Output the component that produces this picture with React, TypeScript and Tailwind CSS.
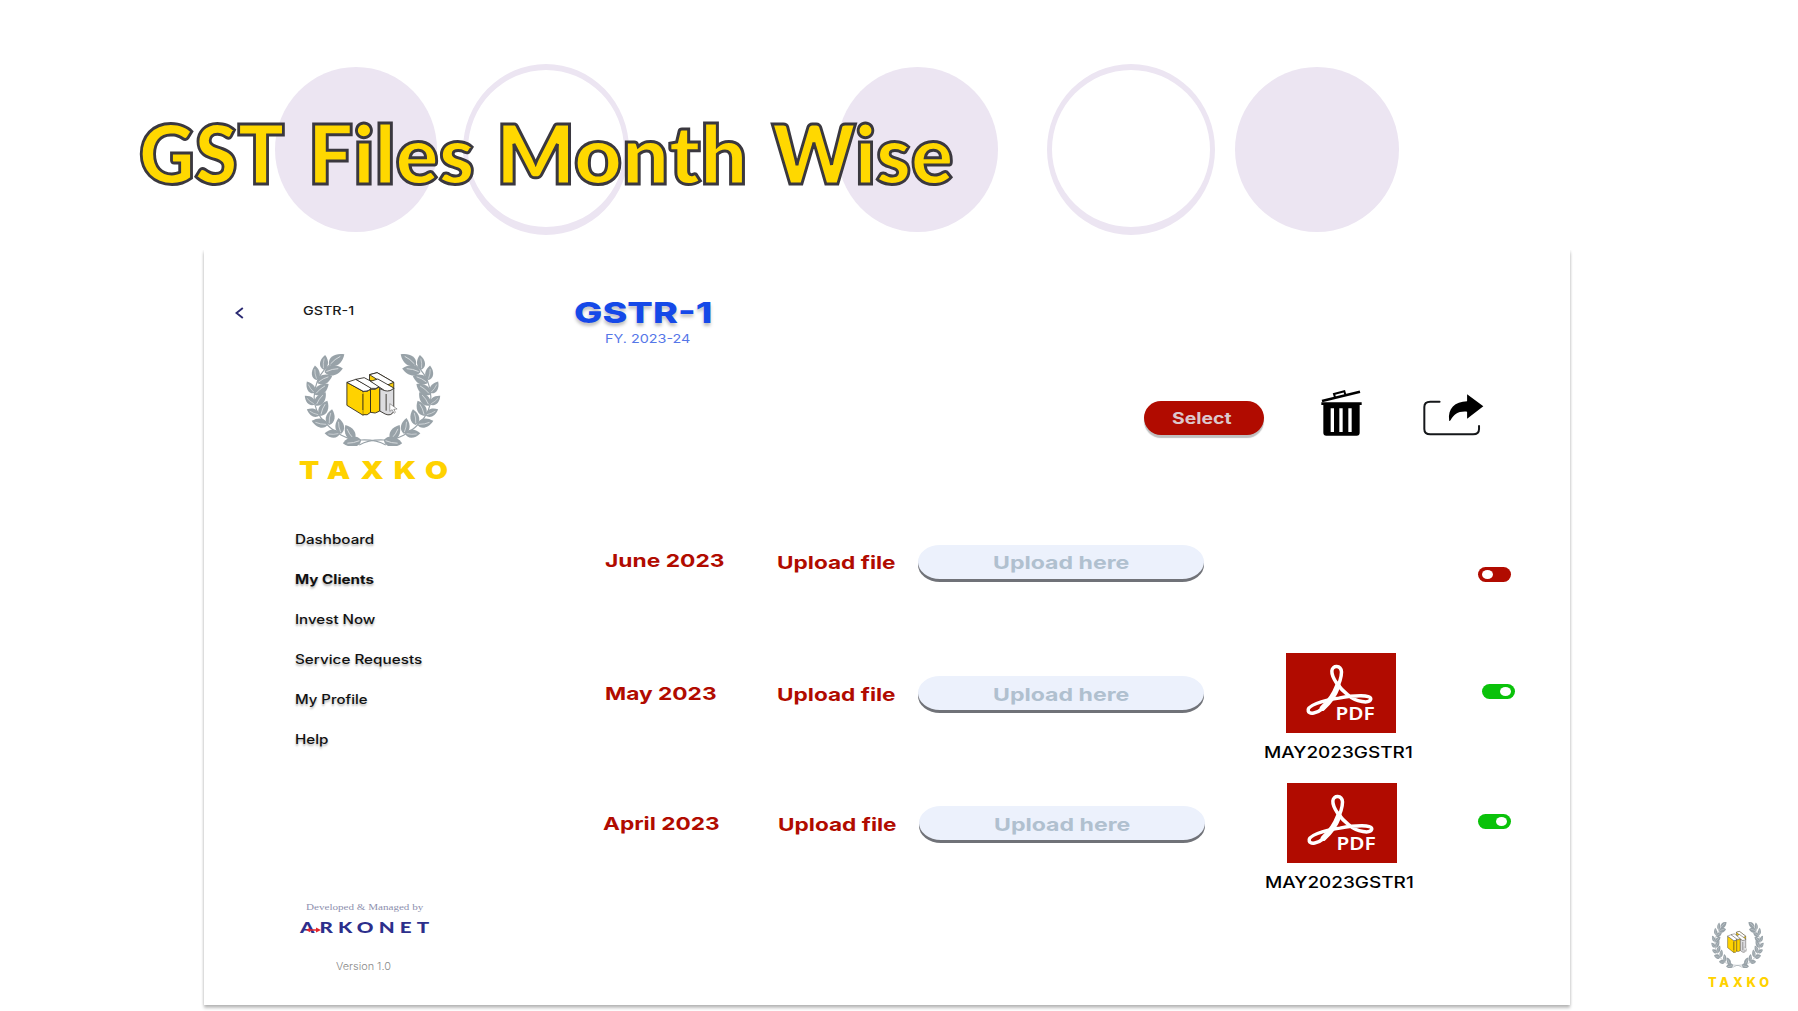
import { useLayoutEffect, useRef, useState } from "react";
import type { ReactNode } from "react";

/** Single line of text stretched horizontally to fill the width of its box. */
function Fit({ className, children }: { className: string; children: ReactNode }) {
  const box = useRef<HTMLDivElement>(null);
  const text = useRef<HTMLSpanElement>(null);
  const [scale, setScale] = useState(1);
  useLayoutEffect(() => {
    if (!box.current || !text.current) return;
    const spacing = parseFloat(getComputedStyle(text.current).letterSpacing) || 0;
    const natural = text.current.offsetWidth - spacing;
    if (natural > 0) setScale(box.current.clientWidth / natural);
  }, []);
  return (
    <div ref={box} className={`shrink-0 whitespace-nowrap ${className}`}>
      <span ref={text} className="inline-block origin-left" style={{ transform: `scaleX(${scale})` }}>
        {children}
      </span>
    </div>
  );
}

const leaves: [number, number, number, number][] = [
  [388, 374, -36, 56],
  [371, 387, -84, 44],
  [374, 395, -12, 56],
  [351, 418, -98, 44],
  [352, 427, -26, 50],
  [344, 457, -124, 42],
  [345, 462, -38, 52],
  [345, 491, -140, 40],
  [348, 495, -54, 50],
  [359, 523, -156, 42],
  [362, 526, -66, 50],
  [384, 551, -168, 50],
  [388, 553, -80, 48],
  [420, 578, -180, 46],
  [424, 579, -100, 48],
  [464, 597, -122, 52],
  [484, 598, 170, 56],
];

function Branch() {
  return (
    <g>
      <path d="M390 372C345 405 325 480 362 530C400 580 450 600 484 598Q528 596 558 613" fill="none" stroke="#98a2a8" strokeWidth="3.5" />
      {leaves.map(([x, y, a, l], i) => (
        <g key={i} transform={`translate(${x} ${y}) rotate(${a}) scale(${l / 50})`}>
          <path d="M0 0C6-19 31-20 50 0C33 16 11 18 0 0Z" fill="#98a2a8" />
          <path d="M5-1Q22-5 38-2" fill="none" stroke="#dfe3e5" strokeWidth="2.2" />
        </g>
      ))}
    </g>
  );
}

function Emblem({ className }: { className: string }) {
  return (
    <svg viewBox="312 340 412 276" preserveAspectRatio="none" className={className}>
      <Branch />
      <g transform="translate(1036 0) scale(-1 1)">
        <Branch />
      </g>
      <g stroke="#29251f" strokeWidth="2.6" strokeLinejoin="round">
        <path d="M509 402L532 396L582 425V445L555 440L509 418Z" fill="#f8cd08" />
        <path d="M509 402L532 396L582 425L560 434Z" fill="#fff" />
        <path d="M441 425L490 452V524L441 494Z" fill="#ffd200" />
        <path d="M490 452Q503 455 512 446V515Q503 526 490 522Z" fill="#ffd200" />
        <path d="M441 425L468 416L514 441Q510 452 490 452Z" fill="#fff" />
        <path d="M512 446Q526 450 540 438V511Q526 521 512 515Z" fill="#ffd200" />
        <path d="M468 416L493 411L540 436Q530 447 514 443Z" fill="#fff" />
        <path d="M540 444Q562 456 582 442V512Q574 528 556 520L540 511Z" fill="#dcdcdf" />
        <path d="M512 422L534 415L582 442Q572 454 555 450Z" fill="#fff" />
        <path d="M559 460V510" fill="none" />
      </g>
      <path d="M489.500 454V521" stroke="#ffd200" strokeWidth="4" />
      <path d="M489 460V508" stroke="#29251f" strokeWidth="2.2" />
      <path d="M570 489V512L577 507L583 518L587 515L582 506L592 505Z" fill="#fff" stroke="#555" strokeWidth="1.5" />
    </svg>
  );
}

function PdfTile() {
  return (
    <svg viewBox="139 39 331 241" preserveAspectRatio="none" className="block h-[80px] w-[110px]">
      <rect x="139" y="39" width="331" height="241" fill="#b10b00" />
      <g fill="none" stroke="#fff" strokeLinecap="round">
        <path strokeWidth="10.5" d="M206 214C200 198 248 182 298 175C345 166 396 164 394 178C391 192 350 188 325 165C300 145 276 115 277 93C279 75 304 75 306 96C306 128 276 183 250 206C231 222 210 224 206 214Z" />
        <path strokeWidth="17" d="M295 138C286 162 269 188 249 205" />
      </g>
      <text x="288" y="241" textLength="118" lengthAdjust="spacingAndGlyphs" fill="#fff" fontSize="54" fontWeight="600" fontFamily="'Noto Sans', sans-serif">
        PDF
      </text>
    </svg>
  );
}

function Toggle({ on }: { on: boolean }) {
  return (
    <div className={`flex h-[15px] w-[33px] items-center rounded-full px-[4px] ${on ? "justify-end bg-[#0ac20a]" : "justify-start bg-[#b10b00]"}`}>
      <div className="h-[9px] w-[11px] rounded-[50%] bg-white" />
    </div>
  );
}

function TrashIcon() {
  return (
    <svg viewBox="604 58 123 138" preserveAspectRatio="none" className="h-[46px] w-[41px]">
      <path d="M607 91L721 63" stroke="#000" strokeWidth="7.5" />
      <path d="M646 80L643 70L674 62L677 72" fill="none" stroke="#000" strokeWidth="6" />
      <path d="M605 95H726V103H720V186Q720 195 711 195H620Q611 195 611 186V103H605Z" />
      <path d="M638 113V184M664 113V184M691 113V184" stroke="#fff" strokeWidth="10" />
    </svg>
  );
}

function ShareIcon() {
  return (
    <svg viewBox="908 70 184 126" preserveAspectRatio="none" className="h-[42px] w-[61px]">
      <path d="M958 93H930Q912 93 912 109V175Q912 191 930 191H1059Q1077 191 1077 175V166" fill="none" stroke="#15171a" strokeWidth="6" strokeLinecap="round" />
      <path d="M987 150C982 114 1004 93 1041 92V71L1090 107L1041 144V123C1014 121 1002 130 991 149Q988 152 987 150Z" />
    </svg>
  );
}

interface RowProps {
  month: string;
  monthClass: string;
  uploadClass: string;
  shift: string;
  toggleClass: string;
  file?: string;
  on: boolean;
}

function Row({ month, monthClass, uploadClass, shift, toggleClass, file, on }: RowProps) {
  return (
    <div className="flex h-[130px] items-start font-bold text-[#b10b00]">
      <div className="w-[178px]">
        <Fit className={`text-[18px] leading-[20px] ${monthClass}`}>{month}</Fit>
      </div>
      <div className={`flex ${shift}`}>
        <Fit className={`w-[118px] text-[18px] leading-[20px] ${uploadClass}`}>Upload file</Fit>
        <div className="ml-[23px] mt-[23px] h-[34px] w-[286px] rounded-[22px/17px] bg-[#ecf1fc] pl-[75px] text-[#b0c0cf] shadow-[0_3px_0_#707278]">
          <Fit className={`-mt-[23px] w-[136px] text-[18px] leading-[20px] ${uploadClass}`}>Upload here</Fit>
        </div>
        <div className="ml-[60px] flex w-[148px] flex-col items-center pl-[6px] text-black">
          {file && (
            <>
              <PdfTile />
              <Fit className="-ml-[5px] mt-[10px] w-[149px] text-[15.5px] font-medium leading-[20px]">{file}</Fit>
            </>
          )}
        </div>
      </div>
      <div className={toggleClass}>
        <Toggle on={on} />
      </div>
    </div>
  );
}

const menu = [
  { label: "Dashboard", style: "w-[79px] font-medium" },
  { label: "My Clients", style: "w-[79px] font-bold" },
  { label: "Invest Now", style: "w-[81px] font-medium" },
  { label: "Service Requests", style: "w-[127px] font-medium" },
  { label: "My Profile", style: "w-[73px] font-medium" },
  { label: "Help", style: "w-[34px] font-medium" },
];

export default function App() {
  return (
    <main className="flex h-[1011px] w-[1798px] flex-col overflow-hidden bg-white font-['Inter',sans-serif]">
      <header className="relative h-[250px]">
        <div className="absolute inset-0 flex items-start pl-[275px] pt-[64px]">
          <div className="mt-[3px] h-[165px] w-[162px] rounded-[50%] bg-[#ece5f2]" />
          <div className="ml-[26px] h-[171px] w-[166px] rounded-[50%] border-x-[5px] border-b-[8px] border-t-[6px] border-[#ece5f2]" />
          <div className="ml-[208px] mt-[3px] h-[165px] w-[161px] rounded-[50%] bg-[#ece5f2]" />
          <div className="ml-[49px] h-[171px] w-[168px] rounded-[50%] border-x-[5px] border-b-[8px] border-t-[6px] border-[#ece5f2]" />
          <div className="ml-[20px] mt-[3px] h-[165px] w-[164px] rounded-[50%] bg-[#ece5f2]" />
        </div>
        <h1 className="relative flex pl-[139px] pt-[103px] font-['Lato',sans-serif] text-[82px] font-extrabold leading-[98px] text-[#ffd800] [-webkit-text-stroke:3px_#3a383f]">
          <Fit className="w-[146px]">GST</Fit>
          <Fit className="ml-[23px] w-[166px]">Files</Fit>
          <Fit className="ml-[22px] w-[251px]">Month</Fit>
          <Fit className="ml-[25px] w-[181px]">Wise</Fit>
        </h1>
      </header>

      <div className="flex h-[761px] pl-[204px]">
        <section className="flex h-[755px] w-[1366px] shrink-0 bg-white shadow-[0_3px_3px_rgba(0,0,0,0.25),0_0_3px_rgba(0,0,0,0.12)] [clip-path:inset(0_-6px_-6px_-6px)]">
          <aside className="flex w-[341px] flex-col">
            <div className="flex pl-[31px] pt-[51px]">
              <svg viewBox="0 0 9 12" className="mt-[6px] h-[12px] w-[9px]">
                <path d="M7.8 1L1.5 6L7.8 11" fill="none" stroke="#2b2a72" strokeWidth="1.9" />
              </svg>
              <Fit className="ml-[59px] w-[51px] text-[11.5px] font-medium leading-[20px] text-[#1a1a1a]">GSTR-1</Fit>
            </div>
            <Emblem className="ml-[100px] mt-[33px] h-[92px] w-[137px]" />
            <Fit className="ml-[95px] mt-[9px] w-[149px] text-[25px] font-black leading-[30px] tracking-[0.34em] text-[#ffd200]">TAXKO</Fit>
            <nav className="mt-[35px] flex flex-col pl-[91px]">
              {menu.map((m) => (
                <Fit key={m.label} className={`h-[40px] text-[12.5px] leading-[40px] text-[#111] [text-shadow:0_2px_2px_rgba(0,0,0,0.3)] ${m.style}`}>
                  {m.label}
                </Fit>
              ))}
            </nav>
            <Fit className="ml-[102px] mt-[137px] w-[117px] font-['Liberation_Serif',serif] text-[9px] leading-[20px] text-[#8d8fae]">Developed &amp; Managed by</Fit>
            <div className="relative ml-[96px] w-[129px]">
              <Fit className="w-[129px] font-['Lato',sans-serif] text-[15.5px] font-black leading-[20px] tracking-[0.25em] text-[#2c2f8c]">ARKONET</Fit>
              <svg viewBox="0 0 15 6" className="absolute left-[6px] top-[10px] h-[6px] w-[15px]">
                <path d="M0 3L4 .8V2.2H10V.4L15 3L10 5.6V3.8H4V5.2Z" fill="#e5252b" />
              </svg>
            </div>
            <Fit className="ml-[132px] mt-[20px] w-[55px] text-[10.5px] font-light leading-[20px] text-[#888]">Version 1.0</Fit>
          </aside>

          <div className="flex flex-col">
            <Fit className="ml-[29px] mt-[48px] w-[138px] text-[29px] font-extrabold leading-[30px] text-[#1549e8] [text-shadow:0_3px_3px_rgba(0,0,0,0.25)]">GSTR-1</Fit>
            <Fit className="ml-[60px] mt-[1px] w-[85px] text-[11.5px] leading-[20px] text-[#5577e8]">FY. 2023-24</Fit>
            <div className="ml-[599px] mt-[41px] flex h-[46px] items-end">
              <button className="mb-[1px] mt-[11px] flex h-[34px] w-[120px] justify-center rounded-full bg-[#b10b00] pr-[5px] pt-[8px] text-[#dcc8cc] shadow-[0_3px_1px_rgba(0,0,0,0.25)]">
                <Fit className="w-[60px] text-left text-[15.5px] font-bold leading-[20px]">Select</Fit>
              </button>
              <div className="ml-[57px]">
                <TrashIcon />
              </div>
              <div className="ml-[61px]">
                <ShareIcon />
              </div>
            </div>
            <div className="ml-[60px] mt-[86px]">
              <div className="mb-[1px]">
                <Row month="June 2023" monthClass="mt-[29px] w-[119px]" uploadClass="pt-[31px]" shift="-ml-[6px]" toggleClass="ml-[66px] mt-[45px]" on={false} />
              </div>
              <Row month="May 2023" monthClass="mt-[31px] w-[111px]" uploadClass="pt-[32px]" shift="-ml-[6px]" toggleClass="ml-[70px] mt-[31px]" file="MAY2023GSTR1" on />
              <Row month="April 2023" monthClass="-ml-[2px] mt-[31px] w-[117px]" uploadClass="pt-[32px]" shift="-ml-[5px]" toggleClass="ml-[65px] mt-[31px]" file="MAY2023GSTR1" on />
            </div>
          </div>
        </section>

        <div className="ml-[137px] flex flex-col pt-[672px]">
          <Emblem className="ml-[4px] h-[46px] w-[53px]" />
          <Fit className="ml-[1px] mt-[4px] w-[61px] text-[13px] font-extrabold leading-[20px] tracking-[0.3em] text-[#ffd200]">TAXKO</Fit>
        </div>
      </div>
    </main>
  );
}
